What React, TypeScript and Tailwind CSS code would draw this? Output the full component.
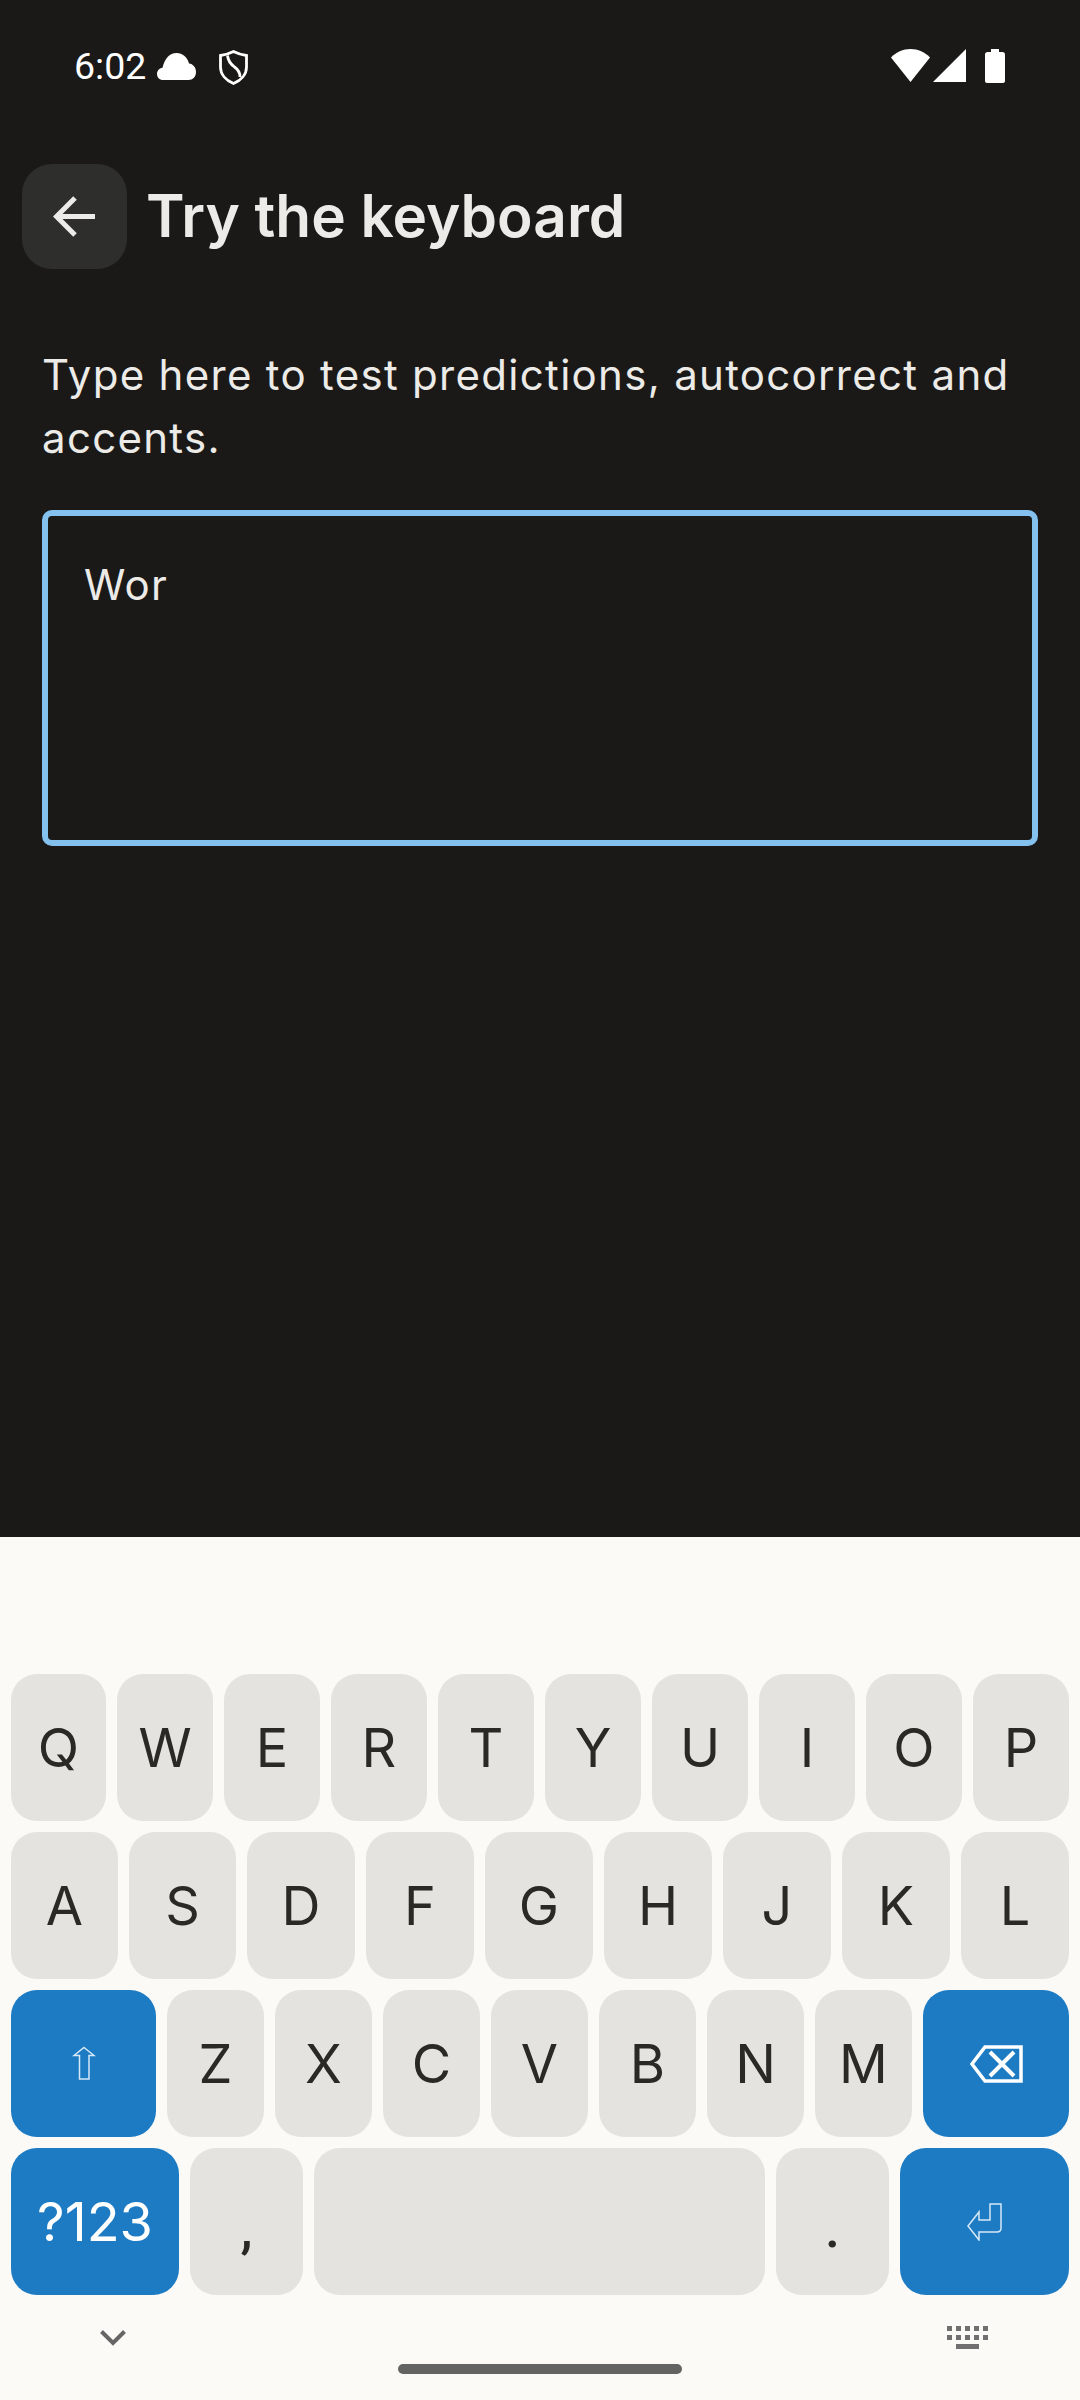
import { ReactNode } from 'react';

const ROW_ONE = ['W', 'E', 'R', 'T', 'Y', 'U', 'I', 'O', 'P'];
const ROW_TWO = ['D', 'F', 'G', 'H', 'J', 'K', 'L'];
const ROW_THREE = ['Z', 'X', 'C', 'V', 'B', 'N', 'M'];

function Key({ children, className = '' }: { children?: ReactNode; className?: string }) {
  return (
    <div className={`flex h-[147px] shrink-0 items-center justify-center rounded-[26px] bg-[#e4e3df] text-[54px] leading-none text-[#2a2925] ${className}`}>
      {children}
    </div>
  );
}

function ActionKey({ children, className = '' }: { children?: ReactNode; className?: string }) {
  return (
    <div className={`flex h-[147px] shrink-0 items-center justify-center rounded-[26px] bg-[#1d7bc4] text-[54px] leading-none text-white ${className}`}>
      {children}
    </div>
  );
}

function StatusBar() {
  return (
    <div className="flex h-[132px] shrink-0 items-start justify-between pl-[74px] pr-[75px] pt-[47px] text-white">
      <div className="flex items-start">
        <span className="font-['Roboto',sans-serif] text-[37.500px] leading-[38px]">6:02</span>
        {/* cloud */}
        <svg className="ml-[11px] mt-[6px]" width="39" height="27" viewBox="0 0 39 27" fill="currentColor">
          <path d="M6 27C2.500 27 0 24.400 0 21c0-3.300 2.300-5.800 5.500-6.200C7.500 6 12.500 0 19.500 0c6.200 0 11 4.200 12.500 10.500C36 11 39 14.200 39 19c0 4.800-3.200 8-7.500 8z" />
        </svg>
        {/* shield */}
        <svg className="ml-[23px] mt-[3px]" width="29" height="35" viewBox="0 0 29 35" fill="none" stroke="currentColor" strokeWidth="2.800">
          <path d="M14.500 1.500C18.500 3.500 23 5 27.500 5.500V17c0 7.500-5.500 13.500-13 16.500C7 30.500 1.500 24.500 1.500 17V5.500C6 5 10.500 3.500 14.500 1.500z" />
          <path d="M8.500 5.500c.5 5 3 8.500 7 11.500 3.500 2.500 5.500 5.500 5.500 10" />
        </svg>
      </div>
      <div className="flex items-start pt-[2px]">
        {/* wifi */}
        <svg width="39" height="33" viewBox="0 0 39 33" fill="currentColor">
          <path d="M19.500 33L0 8.500C5 3.200 12 0 19.500 0S34 3.200 39 8.500z" />
        </svg>
        {/* cell signal */}
        <svg className="ml-[3px]" width="33" height="33" viewBox="0 0 33 33" fill="currentColor">
          <path d="M33 0V33H0z" />
        </svg>
        {/* battery */}
        <svg className="ml-[19px]" width="20" height="34" viewBox="0 0 20 34" fill="currentColor">
          <path d="M6 0h8v3h3.500c1.500 0 2.500 1 2.500 2.500V32c0 1.300-.8 2-2 2H2c-1.200 0-2-.7-2-2V5.500C0 4 1 3 2.500 3H6z" />
        </svg>
      </div>
    </div>
  );
}

export default function App() {
  return (
    <div className="flex h-[2400px] w-[1080px] flex-col overflow-hidden bg-[#1a1918] font-['Inter',sans-serif]">
      <StatusBar />

      {/* Header */}
      <div className="mt-[32px] flex h-[105px] shrink-0 items-center pl-[22px]">
        <button className="flex h-[105px] w-[105px] shrink-0 items-center justify-center rounded-[30px] bg-[#2e2e2d]">
          <svg width="44" height="44" viewBox="0 0 44 44" fill="none" stroke="#ecebe7" strokeWidth="5">
            <path d="M42 21.500H5M22 3L3.500 21.500 22 40" />
          </svg>
        </button>
        <h1 className="ml-[19px] text-[58.500px] font-semibold leading-none text-[#ecebe7]">Try the keyboard</h1>
      </div>

      {/* Body */}
      <div className="flex-1 px-[42px] pt-[74px]">
        <p className="text-[42px] leading-[63px] tracking-[1.300px] text-[#ecebe7]">
          Type here to test predictions, autocorrect and accents.
        </p>
        <div className="mt-[41px] h-[336px] rounded-[10px] border-[6px] border-[#85c1ee] pl-[36px] pt-[45px] text-[42px] leading-[48px] tracking-[1.300px] text-[#ecebe7]">
          Wor
        </div>
      </div>

      {/* Keyboard */}
      <div className="flex h-[863px] shrink-0 flex-col bg-[#fbfaf6] px-[11px] pt-[137px]">
        <div className="flex flex-col gap-[11px]">
          <div className="flex gap-[11px]">
            <Key className="w-[95px]">Q</Key>
            {ROW_ONE.map((letter) => (
              <Key key={letter} className="w-[96px]">{letter}</Key>
            ))}
          </div>
          <div className="flex gap-[11px]">
            <Key className="w-[107px]">A</Key>
            <Key className="w-[107px]">S</Key>
            {ROW_TWO.map((letter) => (
              <Key key={letter} className="w-[108px]">{letter}</Key>
            ))}
          </div>
          <div className="flex gap-[11px]">
            <ActionKey className="w-[145px]">
              <svg width="24" height="35" viewBox="0 0 24 35" fill="none" stroke="#d5e9f8" strokeWidth="1.500">
                <path d="M12 1.500L22 9.500H17V33H7.500V9.500H2z" />
              </svg>
            </ActionKey>
            {ROW_THREE.map((letter) => (
              <Key key={letter} className="w-[97px]">{letter}</Key>
            ))}
            <ActionKey className="w-[146px]">
              <svg width="54" height="38" viewBox="0 0 54 38" fill="none" stroke="#ffffff" strokeWidth="3.500">
                <path d="M52 2H16L3 19l13 17h36z" />
                <path d="M21 7l24 24M45 7L21 31" strokeWidth="4" />
              </svg>
            </ActionKey>
          </div>
          <div className="flex gap-[11px]">
            <ActionKey className="w-[168px]">?123</ActionKey>
            <Key className="w-[113px] pt-[14px] font-['Roboto',sans-serif] text-[38px] font-medium">,</Key>
            <Key className="flex-1" />
            <Key className="w-[113px] pt-[14px] font-['Roboto',sans-serif] text-[38px] font-medium">.</Key>
            <ActionKey className="w-[169px]">
              <svg width="36" height="38" viewBox="0 0 36 38" fill="none" stroke="#d5e9f8" strokeWidth="1.500">
                <path d="M34 1H23V17H12V9L1 23l11 14v-8h18c2.500 0 4-1.500 4-4z" />
              </svg>
            </ActionKey>
          </div>
        </div>

        {/* Keyboard nav row */}
        <div className="flex items-start justify-between pl-[89px] pr-[81px] pt-[31px]">
          <svg className="mt-[4px]" width="26" height="16" viewBox="0 0 26 16" fill="none" stroke="#666666" strokeWidth="4">
            <path d="M1.500 1.500L13 13 24.500 1.500" />
          </svg>
          <svg width="41" height="23" viewBox="0 0 41 23" fill="#707070">
            <path d="M0 0h5v5H0zM9 0h5v5H9zM18 0h5v5h-5zM27 0h5v5h-5zM36 0h5v5h-5zM0 9h5v5H0zM9 9h5v5H9zM18 9h5v5h-5zM27 9h5v5h-5zM36 9h5v5h-5zM9 18h23v5H9z" />
          </svg>
        </div>

        <div className="mx-auto mt-[15px] h-[10px] w-[284px] rounded-full bg-[#636361]" />
      </div>
    </div>
  );
}
